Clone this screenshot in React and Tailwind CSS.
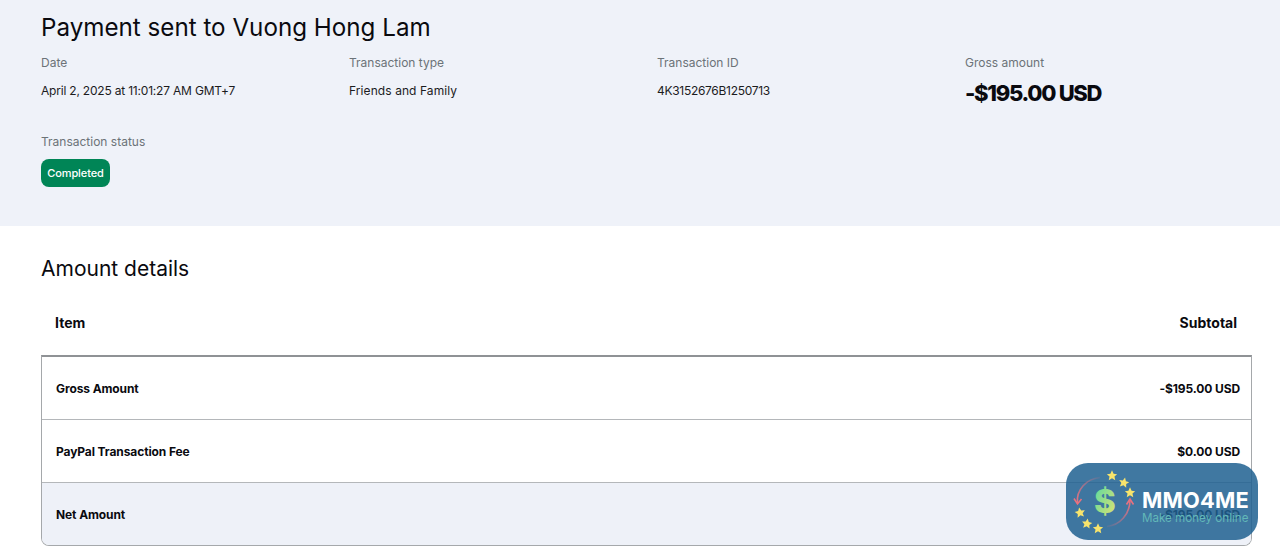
// App.jsx
import React from "react";

const font = "font-['Inter','Liberation_Sans',sans-serif]";

const Star = ({ x, y, r = 0 }) => (
  <path
    transform={`translate(${x} ${y}) rotate(${r}) scale(1.12)`}
    d="M0 -4.6 L1.4 -1.5 L4.6 -1.2 L2.2 1 L2.9 4.2 L0 2.5 L-2.9 4.2 L-2.2 1 L-4.6 -1.2 L-1.4 -1.5 Z"
    fill="#f8e46c"
  />
);

const Logo = () => (
  <svg width="66" height="66" viewBox="0 0 66 66" className="shrink-0">
    <defs>
      <linearGradient id="dollar" x1="0" y1="0" x2="1" y2="1">
        <stop offset="0" stopColor="#4fd8a8" />
        <stop offset="1" stopColor="#e8e46a" />
      </linearGradient>
      <linearGradient id="arcLeft" x1="1" y1="0" x2="0" y2="1">
        <stop offset="0" stopColor="#e8717f" stopOpacity="0.1" />
        <stop offset="1" stopColor="#e8717f" />
      </linearGradient>
      <linearGradient id="arcRight" x1="0" y1="1" x2="1" y2="0">
        <stop offset="0" stopColor="#e8717f" stopOpacity="0.1" />
        <stop offset="1" stopColor="#e8717f" />
      </linearGradient>
    </defs>
    <path d="M28 8.5 C14 10 4 21 5.5 34" fill="none" stroke="url(#arcLeft)" strokeWidth="1.6" />
    <path d="M2 29.5 L5.5 35 L9.5 30" fill="none" stroke="#e8717f" strokeWidth="1.6" />
    <path d="M35 57.5 C48 56 58 45 58 31" fill="none" stroke="url(#arcRight)" strokeWidth="1.6" />
    <path d="M54.5 35.5 L58 30 L61.5 35.5" fill="none" stroke="#e8717f" strokeWidth="1.6" />
    <Star x={40} y={6.5} />
    <Star x={52} y={13.5} r={12} />
    <Star x={58} y={23.5} />
    <Star x={8} y={43.5} r={-10} />
    <Star x={15} y={54.5} r={8} />
    <Star x={26} y={59.5} />
    <text
      x="33"
      y="43.5"
      textAnchor="middle"
      fontSize="33"
      fontWeight="800"
      fontFamily="Inter, sans-serif"
      fill="url(#dollar)"
    >
      $
    </text>
  </svg>
);

const Meta = ({ label, valueClass = "", children }) => (
  <div>
    <div className="text-[12px] leading-4 text-[#6c7378]">{label}</div>
    <div className={`mt-3 text-[12px] leading-4 text-[#1c1c1e] ${valueClass}`}>{children}</div>
  </div>
);

const Row = ({ name, value, className = "", h = "h-[63px]" }) => (
  <div className={`flex ${h} items-center justify-between pl-[14px] pr-[11px] pt-[2px] text-[12px] font-bold tracking-[-0.1px] text-[#0a0a0f] ${className}`}>
    <span>{name}</span>
    <span>{value}</span>
  </div>
);

const App = () => {
  return (
    <div className={`relative h-[550px] w-[1280px] overflow-hidden bg-white ${font}`}>
      {/* Transaction summary */}
      <section className="h-[226px] bg-[#eff2f9] px-[41px] pt-[11px]">
        <h1 className="text-[24.2px] leading-[34px] text-[#0a0a0f]">Payment sent to Vuong Hong Lam</h1>
        <div className="mt-[10px] grid grid-cols-[308px_308px_308px_1fr]">
          <Meta label="Date" valueClass="tracking-[-0.2px]">April 2, 2025 at 11:01:27 AM GMT+7</Meta>
          <Meta label="Transaction type" valueClass="tracking-[0.08px]">Friends and Family</Meta>
          <Meta label="Transaction ID" valueClass="tracking-[-0.3px]">4K3152676B1250713</Meta>
          <div>
            <div className="text-[12px] leading-4 text-[#6c7378]">Gross amount</div>
            <div className="mt-[6px] text-[22px] leading-8 font-extrabold tracking-[-1.3px] text-[#0a0a0f]">-$195.00 USD</div>
          </div>
        </div>
        <div className="mt-[25px] text-[12px] leading-4 text-[#6c7378]">Transaction status</div>
        <div className="mt-[9px] flex h-[28px] w-[69px] items-center justify-center rounded-lg bg-[#008556] text-[11px] font-medium tracking-[-0.1px] text-white">
          Completed
        </div>
      </section>

      {/* Amount details */}
      <section className="pl-[41px] pr-[28px] pt-[30px]">
        <h2 className="text-[21px] leading-[26px] text-[#0a0a0f]">Amount details</h2>
        <div className="mt-[32px] flex h-[41px] items-start justify-between pl-[14px] pr-[15px] text-[14px] font-bold leading-[18px] text-[#0a0a0f]">
          <span>Item</span>
          <span>Subtotal</span>
        </div>
        <div className="overflow-hidden rounded-b-lg border border-t-2 border-[#a5a8ab] border-t-[#8f9295]">
          <Row name="Gross Amount" value="-$195.00 USD" className="border-b border-[#b4b7ba]" />
          <Row name="PayPal Transaction Fee" value="$0.00 USD" className="border-b border-[#b4b7ba]" />
          <Row name="Net Amount" value="-$195.00 USD" className="bg-[#eef1f8]" h="h-[62px]" />
        </div>
      </section>

      {/* Watermark */}
      <div className="absolute left-[1066px] top-[463px] flex h-[77px] w-[192px] items-center rounded-[22px] bg-[#1f6090]/85 pl-[6px]">
        <Logo />
        <div className="ml-[4px] mt-[10px]">
          <div className="text-[21.8px] leading-[22px] font-bold tracking-[0.2px] text-white">MMO4ME</div>
          <div className="text-[11.6px] leading-[14px] text-[#62b8b8]">Make money online</div>
        </div>
      </div>
    </div>
  );
};

export default App;
